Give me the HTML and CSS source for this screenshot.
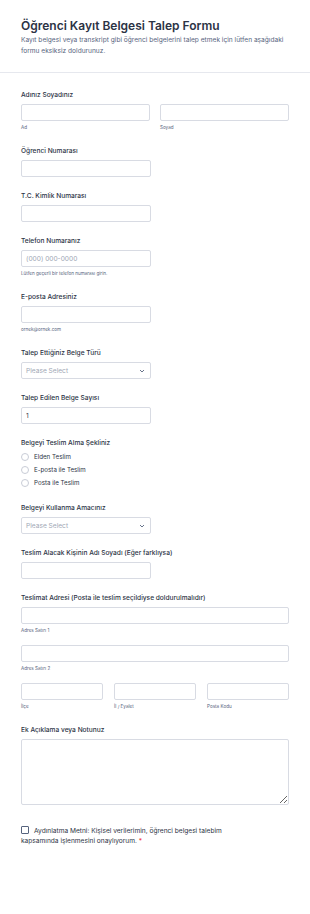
FILE: index.html
```html
<!DOCTYPE html>
<html lang="tr">
<head>
    <meta charset="UTF-8">
    <meta name="viewport" content="width=device-width, initial-scale=1.0">
    <title>Öğrenci Kayıt Belgesi Talep Formu</title>
    <link rel="stylesheet" href="styles.css">
</head>
<body>
    <header class="form-header">
        <h1>Öğrenci Kayıt Belgesi Talep Formu</h1>
        <p>Kayıt belgesi veya transkript gibi öğrenci belgelerini talep etmek için lütfen aşağıdaki formu eksiksiz doldurunuz.</p>
    </header>
    <form class="form-body">
        <div class="field">
            <label class="field-label">Adınız Soyadınız</label>
            <div class="cols two">
                <div>
                    <input type="text" class="input full">
                    <span class="sublabel">Ad</span>
                </div>
                <div>
                    <input type="text" class="input full">
                    <span class="sublabel">Soyad</span>
                </div>
            </div>
        </div>

        <div class="field">
            <label class="field-label">Öğrenci Numarası</label>
            <input type="text" class="input">
        </div>

        <div class="field">
            <label class="field-label">T.C. Kimlik Numarası</label>
            <input type="text" class="input">
        </div>

        <div class="field">
            <label class="field-label">Telefon Numaranız</label>
            <input type="tel" class="input" placeholder="(000) 000-0000">
            <span class="sublabel">Lütfen geçerli bir telefon numarası girin.</span>
        </div>

        <div class="field">
            <label class="field-label">E-posta Adresiniz</label>
            <input type="email" class="input">
            <span class="sublabel">ornek@ornek.com</span>
        </div>

        <div class="field">
            <label class="field-label">Talep Ettiğiniz Belge Türü</label>
            <div class="select">
                <span>Please Select</span>
                <svg width="6" height="4" viewBox="0 0 6 4"><path d="M1 1l2 2 2-2" fill="none" stroke="#57647e" stroke-width="0.9"/></svg>
            </div>
        </div>

        <div class="field">
            <label class="field-label">Talep Edilen Belge Sayısı</label>
            <input type="number" class="input" value="1">
        </div>

        <div class="field">
            <label class="field-label">Belgeyi Teslim Alma Şekliniz</label>
            <div class="radios">
                <label class="radio"><span class="dot"></span>Elden Teslim</label>
                <label class="radio"><span class="dot"></span>E-posta ile Teslim</label>
                <label class="radio"><span class="dot"></span>Posta ile Teslim</label>
            </div>
        </div>

        <div class="field">
            <label class="field-label">Belgeyi Kullanma Amacınız</label>
            <div class="select">
                <span>Please Select</span>
                <svg width="6" height="4" viewBox="0 0 6 4"><path d="M1 1l2 2 2-2" fill="none" stroke="#57647e" stroke-width="0.9"/></svg>
            </div>
        </div>

        <div class="field">
            <label class="field-label">Teslim Alacak Kişinin Adı Soyadı (Eğer farklıysa)</label>
            <input type="text" class="input">
        </div>

        <div class="field">
            <label class="field-label">Teslimat Adresi (Posta ile teslim seçildiyse doldurulmalıdır)</label>
            <div class="addr-line">
                <input type="text" class="input full">
                <span class="sublabel">Adres Satırı 1</span>
            </div>
            <div class="addr-line">
                <input type="text" class="input full">
                <span class="sublabel">Adres Satırı 2</span>
            </div>
            <div class="cols three">
                <div>
                    <input type="text" class="input full">
                    <span class="sublabel">İlçe</span>
                </div>
                <div>
                    <input type="text" class="input full">
                    <span class="sublabel">İl / Eyalet</span>
                </div>
                <div>
                    <input type="text" class="input full">
                    <span class="sublabel">Posta Kodu</span>
                </div>
            </div>
        </div>

        <div class="field">
            <label class="field-label">Ek Açıklama veya Notunuz</label>
            <textarea class="textarea"></textarea>
        </div>

        <div class="field consent">
            <label class="check-label"><span class="box"></span>Aydınlatma Metni: Kişisel verilerimin, öğrenci belgesi talebim kapsamında işlenmesini onaylıyorum. <span class="req">*</span></label>
        </div>
    </form>
</body>
</html>
```

FILE: styles.css
```css
body {
    margin: 0;
    font-family: Inter, "Noto Sans", sans-serif;
    color: #2c3345;
    background-color: #fff;
}
.form-header {
    padding: 16px 21px 15px;
    border-bottom: 1px solid #e6e8ee;
}
.form-header h1 {
    margin: 0;
    font-size: 12px;
    font-weight: 600;
    line-height: 20px;
}
.form-header p {
    margin: -1px 0 0;
    font-size: 6.6px;
    line-height: 11px;
    color: #57647e;
}
.form-body {
    padding: 17px 21px;
}
.field {
    margin-bottom: 14px;
}
.field-label {
    display: block;
    font-size: 6.6px;
    font-weight: 500;
    line-height: 10px;
    margin-bottom: 4px;
}
.input {
    display: block;
    box-sizing: border-box;
    width: 130px;
    height: 17px;
    padding: 0 4px;
    border: 1px solid #d8dbe3;
    border-radius: 2px;
    font-family: inherit;
    font-size: 6.6px;
    color: #2c3345;
    background: #fff;
}
.input::placeholder {
    color: #a0a7b5;
}
.input.full {
    width: 100%;
}
.sublabel {
    display: block;
    margin-top: 3px;
    font-size: 4.6px;
    line-height: 8px;
    color: #57647e;
}
.cols {
    display: grid;
}
.cols.two {
    grid-template-columns: 1fr 1fr;
    gap: 10px;
}
.cols.three {
    grid-template-columns: 1fr 1fr 1fr;
    gap: 11px;
}
.addr-line {
    margin-bottom: 10px;
}
.select {
    box-sizing: border-box;
    width: 130px;
    height: 17px;
    padding: 0 5px 0 4px;
    border: 1px solid #d8dbe3;
    border-radius: 2px;
    display: flex;
    align-items: center;
    justify-content: space-between;
    font-size: 6.6px;
    color: #a0a7b5;
}
.radios {
    margin-top: -2px;
}
.radio {
    display: flex;
    align-items: center;
    height: 13px;
    font-size: 6.2px;
    color: #2c3345;
}
.dot {
    box-sizing: border-box;
    width: 8px;
    height: 8px;
    margin-right: 5px;
    border: 1px solid #c8ccd6;
    border-radius: 50%;
}
.textarea {
    display: block;
    box-sizing: border-box;
    width: 100%;
    height: 66px;
    border: 1px solid #d8dbe3;
    border-radius: 2px;
}
.consent {
    margin-top: 21px;
}
.check-label {
    display: block;
    width: 220px;
    font-size: 6.6px;
    line-height: 10px;
    color: #2c3345;
}
.box {
    display: inline-block;
    box-sizing: border-box;
    width: 8px;
    height: 8px;
    margin-right: 5px;
    vertical-align: -1px;
    border: 1px solid #57647e;
    border-radius: 1px;
}
.req {
    color: #f23a3c;
}
```
